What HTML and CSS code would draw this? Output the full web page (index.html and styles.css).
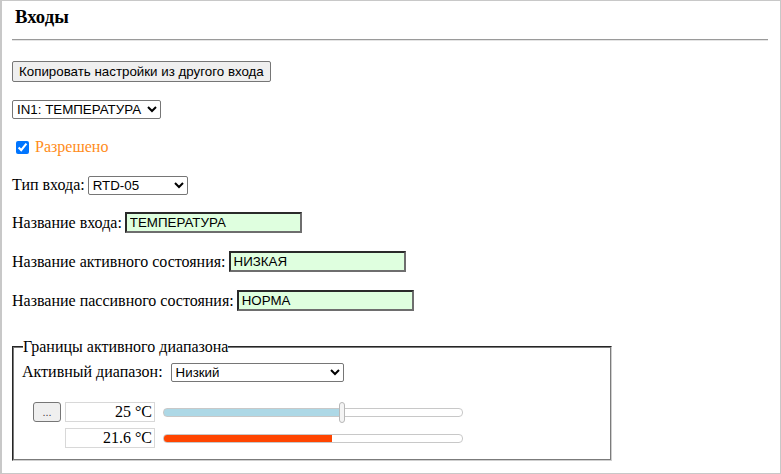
FILE: index.html
```html
<!DOCTYPE html>
<html lang="ru">
<head>
    <meta charset="UTF-8">
    <meta name="viewport" content="width=device-width, initial-scale=1.0">
    <title>Входы</title>
    <link rel="stylesheet" href="styles.css">
</head>
<body>
<div class="page">
    <h3 class="title">Входы</h3>
    <hr class="sep">

    <div class="row">
        <button type="button" class="btn">Копировать настройки из другого входа</button>
    </div>

    <div class="row">
        <select class="sel sel-input">
            <option>IN1: ТЕМПЕРАТУРА</option>
            <option>IN2: ДАВЛЕНИЕ</option>
        </select>
    </div>

    <div class="row">
        <label class="enabled"><input type="checkbox" checked> Разрешено</label>
    </div>

    <div class="row">
        <label for="inType">Тип входа:</label>
        <select id="inType" class="sel sel-type">
            <option>RTD-05</option>
        </select>
    </div>

    <div class="row field">
        <label for="inName">Название входа:</label>
        <input type="text" id="inName" class="name" value="ТЕМПЕРАТУРА">
    </div>

    <div class="row field">
        <label for="actName">Название активного состояния:</label>
        <input type="text" id="actName" class="name" value="НИЗКАЯ">
    </div>

    <div class="row field">
        <label for="pasName">Название пассивного состояния:</label>
        <input type="text" id="pasName" class="name" value="НОРМА">
    </div>

    <fieldset class="range-box">
        <legend>Границы активного диапазона</legend>
        <div class="range-row">
            <label for="actRange">Активный диапазон:</label>
            <select id="actRange" class="sel sel-range">
                <option>Низкий</option>
                <option>Высокий</option>
            </select>
        </div>

        <div class="limits">
            <div class="limit-row">
                <button type="button" class="dots">...</button>
                <span class="value">25 °C</span>
                <input type="range" class="slider" min="0" max="100" value="60" style="--fill: 60%">
            </div>
            <div class="limit-row">
                <span class="value">21.6 °C</span>
                <div class="bar"><div class="bar-fill" style="width: 56.5%"></div></div>
            </div>
        </div>
    </fieldset>
</div>
</body>
</html>
```

FILE: styles.css
```css
html, body {
    margin: 0;
    padding: 0;
    background-color: white;
}

body {
    font-family: "Liberation Serif", "Times New Roman", serif;
    font-size: 16px;
    color: black;
}

.page {
    box-sizing: border-box;
    height: 474px;
    border: 1px solid #c8c8c8;
    border-left-width: 2px;
    padding: 5px 12px 0 10px;
}

.title {
    margin: 0;
    padding-left: 3px;
    font-size: 18.72px;
    line-height: 22px;
}

.sep {
    margin: 11px 0 0 0;
    border: 0;
    border-top: 1px solid #9a9a9a;
    border-bottom: 1px solid #e4e4e4;
}

.row {
    display: flex;
    align-items: center;
    height: 22px;
    margin-top: 16px;
}

.row:first-of-type {
    margin-top: 19px;
}

.row label {
    margin-right: 3px;
}

.field {
    margin-top: 15px;
    height: 23px;
}

.field + .field {
    margin-top: 16px;
}

.btn, .sel, .dots {
    font-family: "Liberation Sans", Arial, sans-serif;
    font-size: 13.33px;
}

.btn {
    height: 21px;
    padding: 1px 6px;
    background-color: #efefef;
    border: 1px solid #767676;
    border-radius: 2px;
    color: black;
}

.sel {
    height: 19px;
    padding: 0;
    border: 1px solid #767676;
    border-radius: 2px;
    background-color: white;
    color: black;
}

.sel-input {
    width: 149px;
}

.sel-type {
    width: 100px;
}

.sel-range {
    width: 173px;
}

.enabled {
    display: flex;
    align-items: center;
    color: #ff8c1a;
    margin-left: 4px;
}

.enabled input {
    margin: 0 6px 0 0;
    width: 13px;
    height: 13px;
}

.name {
    box-sizing: border-box;
    width: 177px;
    height: 21px;
    padding: 0 3px;
    font-family: "Liberation Sans", Arial, sans-serif;
    font-size: 13.33px;
    background-color: #dfffdf;
    border: 2px solid;
    border-color: #2a2a2a #6e6e6e #6e6e6e #2a2a2a;
    color: black;
}

.range-box {
    width: 600px;
    box-sizing: border-box;
    margin: 26px 0 0 0;
    padding: 6px 8px 11px 8px;
    border: 2px groove #c0c0c0;
    border-color: #7a7a7a #cfcfcf #cfcfcf #7a7a7a;
}

.range-box legend {
    padding: 0;
    margin-left: 1px;
}

.range-row {
    display: flex;
    align-items: center;
    height: 20px;
}

.range-row label {
    margin-right: 8px;
}

.limits {
    margin-top: 20px;
    padding-left: 11px;
}

.limit-row {
    display: flex;
    align-items: center;
    height: 20px;
    padding-left: 32px;
}

.limit-row + .limit-row {
    margin-top: 6px;
}

.dots {
    box-sizing: border-box;
    width: 28px;
    height: 20px;
    margin: 0 4px 0 -32px;
    padding: 0;
    font-size: 11px;
    color: #444;
    background-color: #efefef;
    border: 1px solid #767676;
    border-radius: 3px;
}

.value {
    box-sizing: border-box;
    width: 90px;
    height: 20px;
    line-height: 18px;
    padding-right: 2px;
    text-align: right;
    border: 1px solid #d8d8d8;
}

.slider {
    -webkit-appearance: none;
    appearance: none;
    width: 300px;
    height: 22px;
    margin: 0 0 0 8px;
    background: transparent;
}

.slider::-webkit-slider-runnable-track {
    height: 9px;
    box-sizing: border-box;
    border: 1px solid #c8c8c8;
    border-radius: 4px;
    background: linear-gradient(to right, #add8e6 var(--fill), white var(--fill));
}

.slider::-webkit-slider-thumb {
    -webkit-appearance: none;
    width: 6px;
    height: 21px;
    margin-top: -7px;
    box-sizing: border-box;
    border: 1px solid #b8b8b8;
    border-radius: 3px;
    background-color: #f4f4f4;
}

.bar {
    box-sizing: border-box;
    width: 300px;
    height: 9px;
    margin-left: 8px;
    border: 1px solid #c8c8c8;
    border-radius: 4px;
    overflow: hidden;
}

.bar-fill {
    height: 100%;
    background-color: #ff4500;
}
```
